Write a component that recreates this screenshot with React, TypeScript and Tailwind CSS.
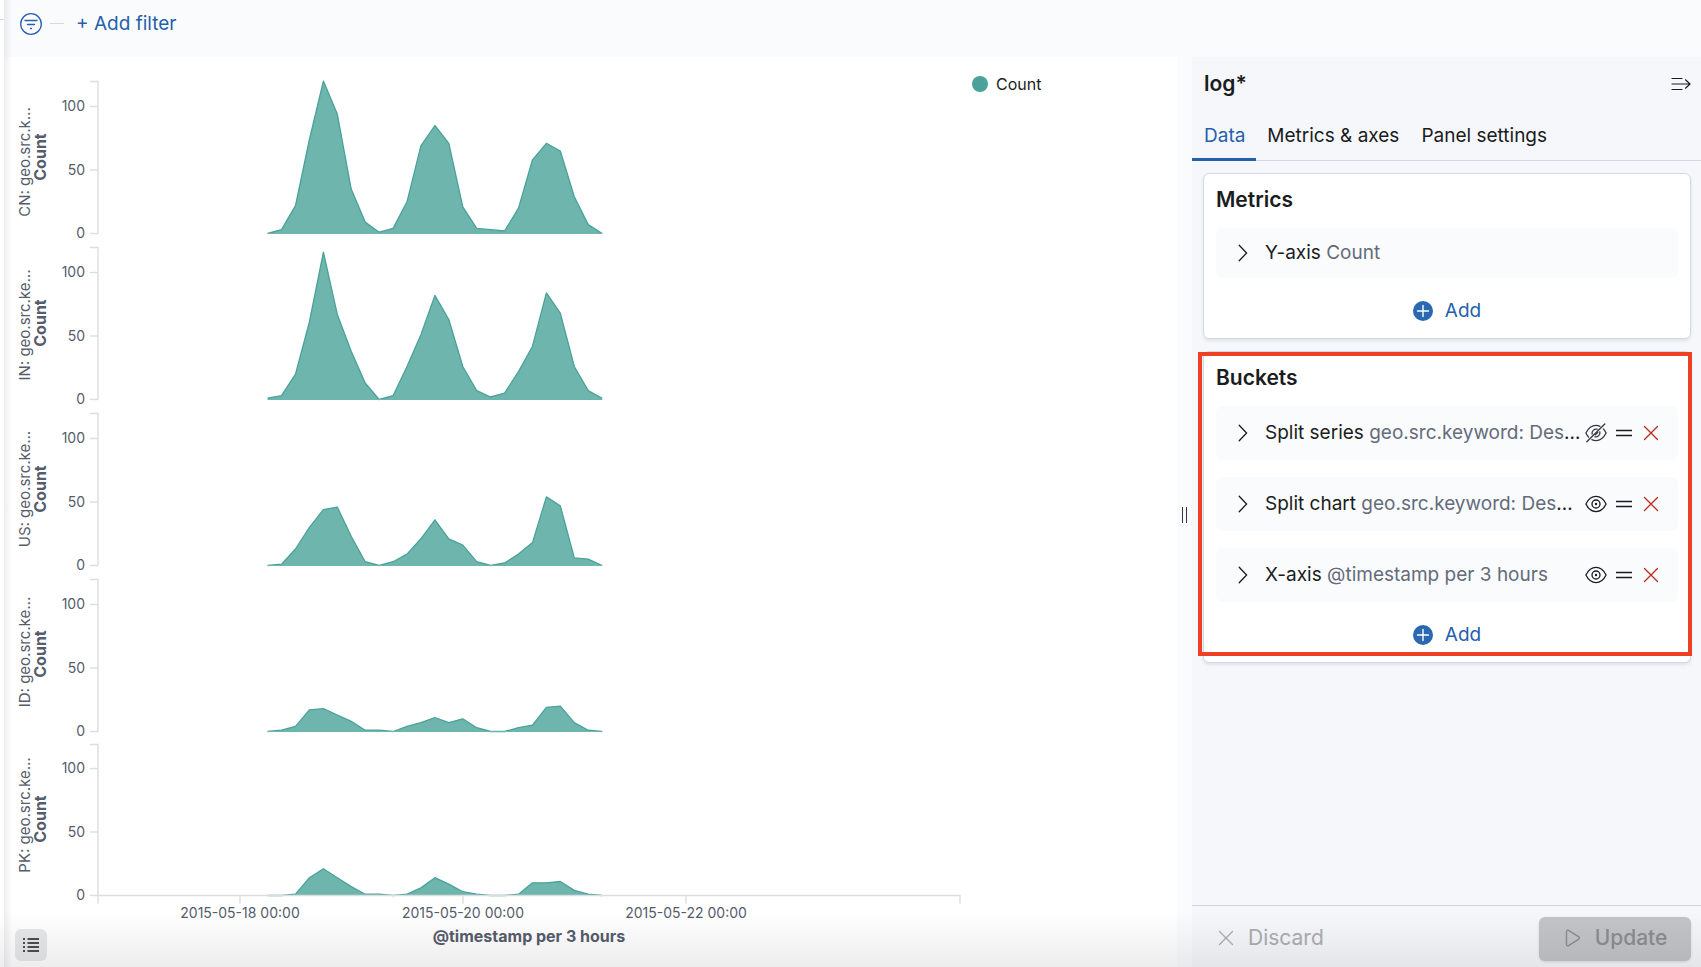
import React from "react";

const HOURS_PITCH = 13.94;
const FIRST_X = 263.6;
const UNIT = 1.27;
const PANEL_PITCH = 166;
const AXIS_X = 94;

const panels = [
  { label: "CN: geo.src.k...", labelY: 105, titleY: 100, values: [0, 3, 22, 74, 120, 94, 35, 9, 1, 4, 25, 69, 85, 71, 21, 4, 3, 2, 20, 58, 71, 65, 29, 7, 0] },
  { label: "IN: geo.src.ke...", labelY: 268, titleY: 266, values: [1, 3, 20, 61, 116, 67, 38, 13, 0, 3, 26, 51, 82, 63, 26, 7, 2, 5, 22, 42, 84, 68, 26, 7, 1] },
  { label: "US: geo.src.ke...", labelY: 432, titleY: 432, values: [0, 1, 13, 30, 44, 46, 23, 3, 0, 3, 9, 21, 36, 21, 16, 3, 0, 2, 9, 18, 54, 47, 6, 5, 0] },
  { label: "ID: geo.src.ke...", labelY: 595, titleY: 597, values: [0, 1, 4, 17, 18, 13, 8, 1, 1, 0, 4, 7, 11, 7, 10, 3, 0, 0, 3, 5, 19, 20, 7, 1, 0] },
  { label: "PK: geo.src.ke...", labelY: 758, titleY: 762, values: [0, 0, 1, 14, 21, 14, 7, 1, 1, 0, 1, 6, 14, 9, 3, 1, 0, 0, 1, 10, 10, 11, 4, 1, 0] },
];

const timeTicks = [
  { x: 236, label: "2015-05-18 00:00" },
  { x: 459, label: "2015-05-20 00:00" },
  { x: 682, label: "2015-05-22 00:00" },
];

function AreaChart() {
  return (
    <svg width="960" height="900" viewBox="0 0 960 900" className="shrink-0" role="img" aria-label="Count by @timestamp per 3 hours">
      {panels.map((p, i) => {
        const base = 176.5 + i * PANEL_PITCH - (i === 4 ? 2 : 0);
        const top = 24.5 + i * PANEL_PITCH - (i === 4 ? 1 : 0);
        const points = p.values.map((v, n) => `${(FIRST_X + n * HOURS_PITCH).toFixed(1)},${(base - v * UNIT).toFixed(1)}`);
        const lastX = (FIRST_X + 24 * HOURS_PITCH).toFixed(1);
        return (
          <g key={p.label}>
            <text transform={`translate(26 ${p.labelY}) rotate(-90)`} textAnchor="middle" className="fill-[#555c6b] text-[15px]">{p.label}</text>
            <text transform={`translate(42 ${p.titleY}) rotate(-90)`} textAnchor="middle" className="fill-[#555c6b] text-[16px] font-bold">Count</text>
            <path d={`M86 ${top}H${AXIS_X}V${base}`} className="fill-none stroke-[#dcdddf]" strokeWidth="1.4" />
            {[0, 50, 100].map((t) => (
              <g key={t}>
                <path d={`M86 ${base - t * UNIT}H${AXIS_X}`} className="stroke-[#dcdddf]" strokeWidth="1.4" />
                <text x="81" y={base - t * UNIT + 4.5} textAnchor="end" className="fill-[#555c6b] text-[14px]">{t}</text>
              </g>
            ))}
            <path d={`M${FIRST_X},${base}L${points.join("L")}L${lastX},${base}Z`} className="fill-[#6eb5ae]" />
            <path d={`M${points.join("L")}`} className="fill-none stroke-[#4aa299]" strokeWidth="1.3" strokeLinejoin="round" />
            <path d={`M${FIRST_X},${base}H${lastX}`} className="stroke-[#6eb5ae]" strokeWidth="1" />
          </g>
        );
      })}
      <path d={`M${AXIS_X} 846.5V838.5H956V846.5M236 838.5V846.5M459 838.5V846.5M682 838.5V846.5`} className="fill-none stroke-[#dcdddf]" strokeWidth="1.4" />
      {timeTicks.map((t) => (
        <text key={t.label} x={t.x} y="861" textAnchor="middle" className="fill-[#555c6b] text-[14px]">{t.label}</text>
      ))}
      <text x="525" y="885" textAnchor="middle" className="fill-[#555c6b] text-[16px] font-bold">@timestamp per 3 hours</text>
    </svg>
  );
}

const Chevron = () => (
  <svg width="10" height="18" viewBox="0 0 10 18" className="fill-none stroke-current" strokeWidth="1.3" strokeLinecap="round"><path d="M1.2 1.2L8.6 9L1.2 16.8" /></svg>
);

const Cross = () => (
  <svg width="16" height="16" viewBox="0 0 16 16" className="fill-none stroke-current" strokeWidth="1.3" strokeLinecap="round"><path d="M1.5 1.5L14.5 14.5M14.5 1.5L1.5 14.5" /></svg>
);

const Grab = () => (
  <svg width="18" height="8" viewBox="0 0 18 8" className="fill-none stroke-current" strokeWidth="1.3"><path d="M1 1.5H17M1 6.5H17" /></svg>
);

const Eye = () => (
  <svg width="22" height="18" viewBox="0 0 22 18" className="fill-none stroke-current" strokeWidth="1.3">
    <path d="M.9 9C3.3 4.2 6.8 1.4 11 1.4S18.7 4.2 21.1 9C18.7 13.8 15.2 16.6 11 16.6S3.3 13.8.9 9Z" strokeLinejoin="round" />
    <circle cx="11" cy="9" r="4" />
    <circle cx="11" cy="9" r="1.2" className="fill-current stroke-none" />
  </svg>
);

const EyeClosed = () => (
  <svg width="22" height="20" viewBox="0 0 22 20" className="fill-none stroke-current" strokeWidth="1.3" strokeLinecap="round">
    <path d="M1.8 18.8L19.8 1" />
    <path d="M3.6 14C2.5 12.9 1.6 11.5.9 10C3.3 5.2 6.8 2.4 11 2.4C12.400 2.4 13.7 2.7 15 3.3" />
    <path d="M18.3 5.9C19.4 7 20.3 8.4 21.1 10C18.7 14.8 15.2 17.6 11 17.6C9.5 17.6 8.2 17.3 6.9 16.6" />
    <path d="M7.1 11.2C6.5 8.3 9 5.6 12.2 6.2M14.900 8.9C15.4 11.7 12.9 14.4 9.9 13.9M10.3 11.8L12.8 9.3" />
  </svg>
);

const PlusCircle = () => (
  <svg width="20" height="20" viewBox="0 0 20 20">
    <circle cx="10" cy="10" r="10" className="fill-[#2a68b1]" />
    <path d="M4.5 10H15.5M10 4.5V15.5" className="stroke-white" strokeWidth="1.4" strokeLinecap="round" />
  </svg>
);

function AddButton() {
  return (
    <button type="button" className="mx-auto flex h-10 items-center gap-3 px-3 text-[19px] leading-6 text-[#2560ad]">
      <PlusCircle />
      Add
    </button>
  );
}

const accordionRow = "flex items-center rounded-md bg-[#fafbfd] pr-[19px] pl-5";

function AccordionLabel({ name, detail, clipped = false }: { name: string; detail: string; clipped?: boolean }) {
  return (
    <button type="button" aria-expanded="false" className="flex min-w-0 flex-1 items-center gap-[17px] text-left text-[19px] leading-6 text-[#1a1c21]">
      <span className="shrink-0 pl-0.5"><Chevron /></span>
      <span className="whitespace-nowrap">
        {name} <span className="text-[#646b7b]">{detail}</span>
        {clipped && "…"}
      </span>
    </button>
  );
}

const buckets = [
  { name: "Split series", detail: "geo.src.keyword: Des", clipped: true, visible: false },
  { name: "Split chart", detail: "geo.src.keyword: Des", clipped: true, visible: true },
  { name: "X-axis", detail: "@timestamp per 3 hours", clipped: false, visible: true },
];

const card = "rounded-md border border-[#d3dae6] bg-white px-3 pt-[10px] shadow-[0_2px_3px_rgba(105,112,125,0.15)]";
const cardTitle = "text-[21px] leading-8 font-semibold";

function Sidebar() {
  return (
    <aside className="flex w-[509px] shrink-0 flex-col bg-[#f5f7fa] text-[#1a1c21]">
      <header className="flex items-center justify-between pt-[11px] pr-2.5 pl-3">
        <h2 className={cardTitle}>log*</h2>
        <button type="button" aria-label="Collapse panel">
          <svg width="20" height="14" viewBox="0 0 20 14" className="fill-none stroke-current" strokeWidth="1.2" strokeLinecap="round">
            <path d="M1 1.5H11M1 12.5H11M1 7H18.5M14.5 2.8L19 7L14.5 11.2" />
          </svg>
        </button>
      </header>
      <div role="tablist" className="mt-[5px] flex h-14 border-b border-[#d3dae6] text-[19px] leading-6">
        <button type="button" role="tab" aria-selected="true" className="-mb-px border-b-3 border-[#2560ad] pt-[9px] pr-[11px] pl-3 text-[#2560ad]">Data</button>
        <button type="button" role="tab" aria-selected="false" className="px-[11px] pt-1.5">Metrics &amp; axes</button>
        <button type="button" role="tab" aria-selected="false" className="px-[11px] pt-1.5">Panel settings</button>
      </div>
      <div className="flex flex-1 flex-col gap-3 pt-3 pr-2.5 pl-[11px]">
        <section className={`${card} h-[166px]`}>
          <h3 className={cardTitle}>Metrics</h3>
          <div className={`${accordionRow} mt-3 h-[50px]`}>
            <AccordionLabel name="Y-axis" detail="Count" />
          </div>
          <div className="mt-[13px] flex"><AddButton /></div>
        </section>
        <section className={`${card} relative h-[312px]`}>
          <h3 className={cardTitle}>Buckets</h3>
          <div className="mt-3 flex flex-col gap-[17px]">
            {buckets.map((b) => (
              <div key={b.name} className={`${accordionRow} h-[54px]`}>
                <AccordionLabel name={b.name} detail={b.detail} clipped={b.clipped} />
                <span className="flex shrink-0 items-center pl-1">
                  <button type="button" aria-label={b.visible ? "Hide bucket" : "Show bucket"} className={b.visible ? "" : "text-[#343741]"}>
                    {b.visible ? <Eye /> : <EyeClosed />}
                  </button>
                  <button type="button" aria-label="Reorder bucket" className="ml-2"><Grab /></button>
                  <button type="button" aria-label="Remove bucket" className="ml-2.5 text-[#bd271e]"><Cross /></button>
                </span>
              </div>
            ))}
          </div>
          <div className="mt-[13px] flex"><AddButton /></div>
          <div className="pointer-events-none absolute top-0 -right-0.5 -left-1.5 h-[304px] border-4 border-[#ef4026]" />
        </section>
      </div>
      <footer className="flex items-center justify-between border-t border-[#cbd5e8] pt-[11px] pr-2.5 pb-1.5 pl-6">
        <button type="button" disabled className="flex items-center gap-3.5 pb-0.5 text-[21px] leading-6 text-[#abadb1]">
          <span className="pl-0.5"><Cross /></span>
          Discard
        </button>
        <button type="button" disabled className="flex h-11 w-[152px] items-center justify-center gap-3.5 rounded-md bg-[#c2c4c8] pb-0.5 pl-0.5 text-[21px] leading-6 font-medium text-[#8b8d91] shadow-sm">
          <svg width="16" height="18" viewBox="0 0 16 18" className="fill-none stroke-current" strokeWidth="1.4" strokeLinejoin="round">
            <path d="M1.5 2.5C1.5 1.3 2.5 .9 3.5 1.4L13.5 7.7C14.6 8.4 14.6 9.6 13.5 10.3L3.5 16.6C2.5 17.1 1.5 16.7 1.5 15.5Z" />
          </svg>
          Update
        </button>
      </footer>
    </aside>
  );
}

export default function App() {
  return (
    <div className="relative flex min-h-screen bg-[#fafbfd] font-['Inter',sans-serif]">
      <div className="w-1 shrink-0 bg-white pt-[19px]">
        <div className="h-px bg-[#d3dae6]" />
      </div>
      <div className="flex min-w-0 flex-1 flex-col">
        <div className="flex h-[57px] items-center pb-2.5 pl-4">
          <button type="button" aria-label="Filter options" className="text-[#2560ad]">
            <svg width="22" height="22" viewBox="0 0 22 22" className="fill-none stroke-current" strokeWidth="1.3" strokeLinecap="round">
              <circle cx="11" cy="11" r="10.3" />
              <path d="M5 7.5H17M7.5 11.5H14.5M10.5 15.5H11.5" />
            </svg>
          </button>
          <div className="mx-2 h-px w-3.5 bg-[#d3dae6]" />
          <button type="button" className="px-1 text-[19px] leading-6 text-[#2560ad]">+ Add filter</button>
        </div>
        <div className="flex flex-1">
          <main className="relative flex min-w-0 flex-1 bg-white">
            <AreaChart />
            <div className="mt-[15px] ml-2 flex h-6 items-center gap-2 text-[16px] text-[#1a1c21]">
              <span className="size-4 rounded-full bg-[#4aa299]" />
              Count
            </div>
            <button type="button" aria-label="Toggle legend" className="absolute bottom-1.5 left-[11px] flex h-8 w-8 items-center justify-center rounded-md bg-[#e6e8ea] text-[#1a1c21]">
              <svg width="18" height="16" viewBox="0 0 18 16" className="stroke-current" strokeWidth="1.3">
                <path d="M1 2H3M5.5 2H17M1 6H3M5.5 6H17M1 10H3M5.5 10H17M1 14H3M5.5 14H17" />
              </svg>
            </button>
          </main>
          <div role="separator" aria-orientation="vertical" className="flex w-[15px] shrink-0 items-center justify-center gap-[3px] pt-1.5">
            <span className="h-4 w-px bg-[#343741]" />
            <span className="h-4 w-px bg-[#343741]" />
          </div>
          <Sidebar />
        </div>
      </div>
      <div className="pointer-events-none absolute inset-y-0 left-1 w-2 bg-linear-to-r from-[#69707d]/12 to-transparent" />
      <div className="pointer-events-none absolute inset-x-0 bottom-0 h-14 bg-linear-to-b from-transparent to-black/7" />
    </div>
  );
}
